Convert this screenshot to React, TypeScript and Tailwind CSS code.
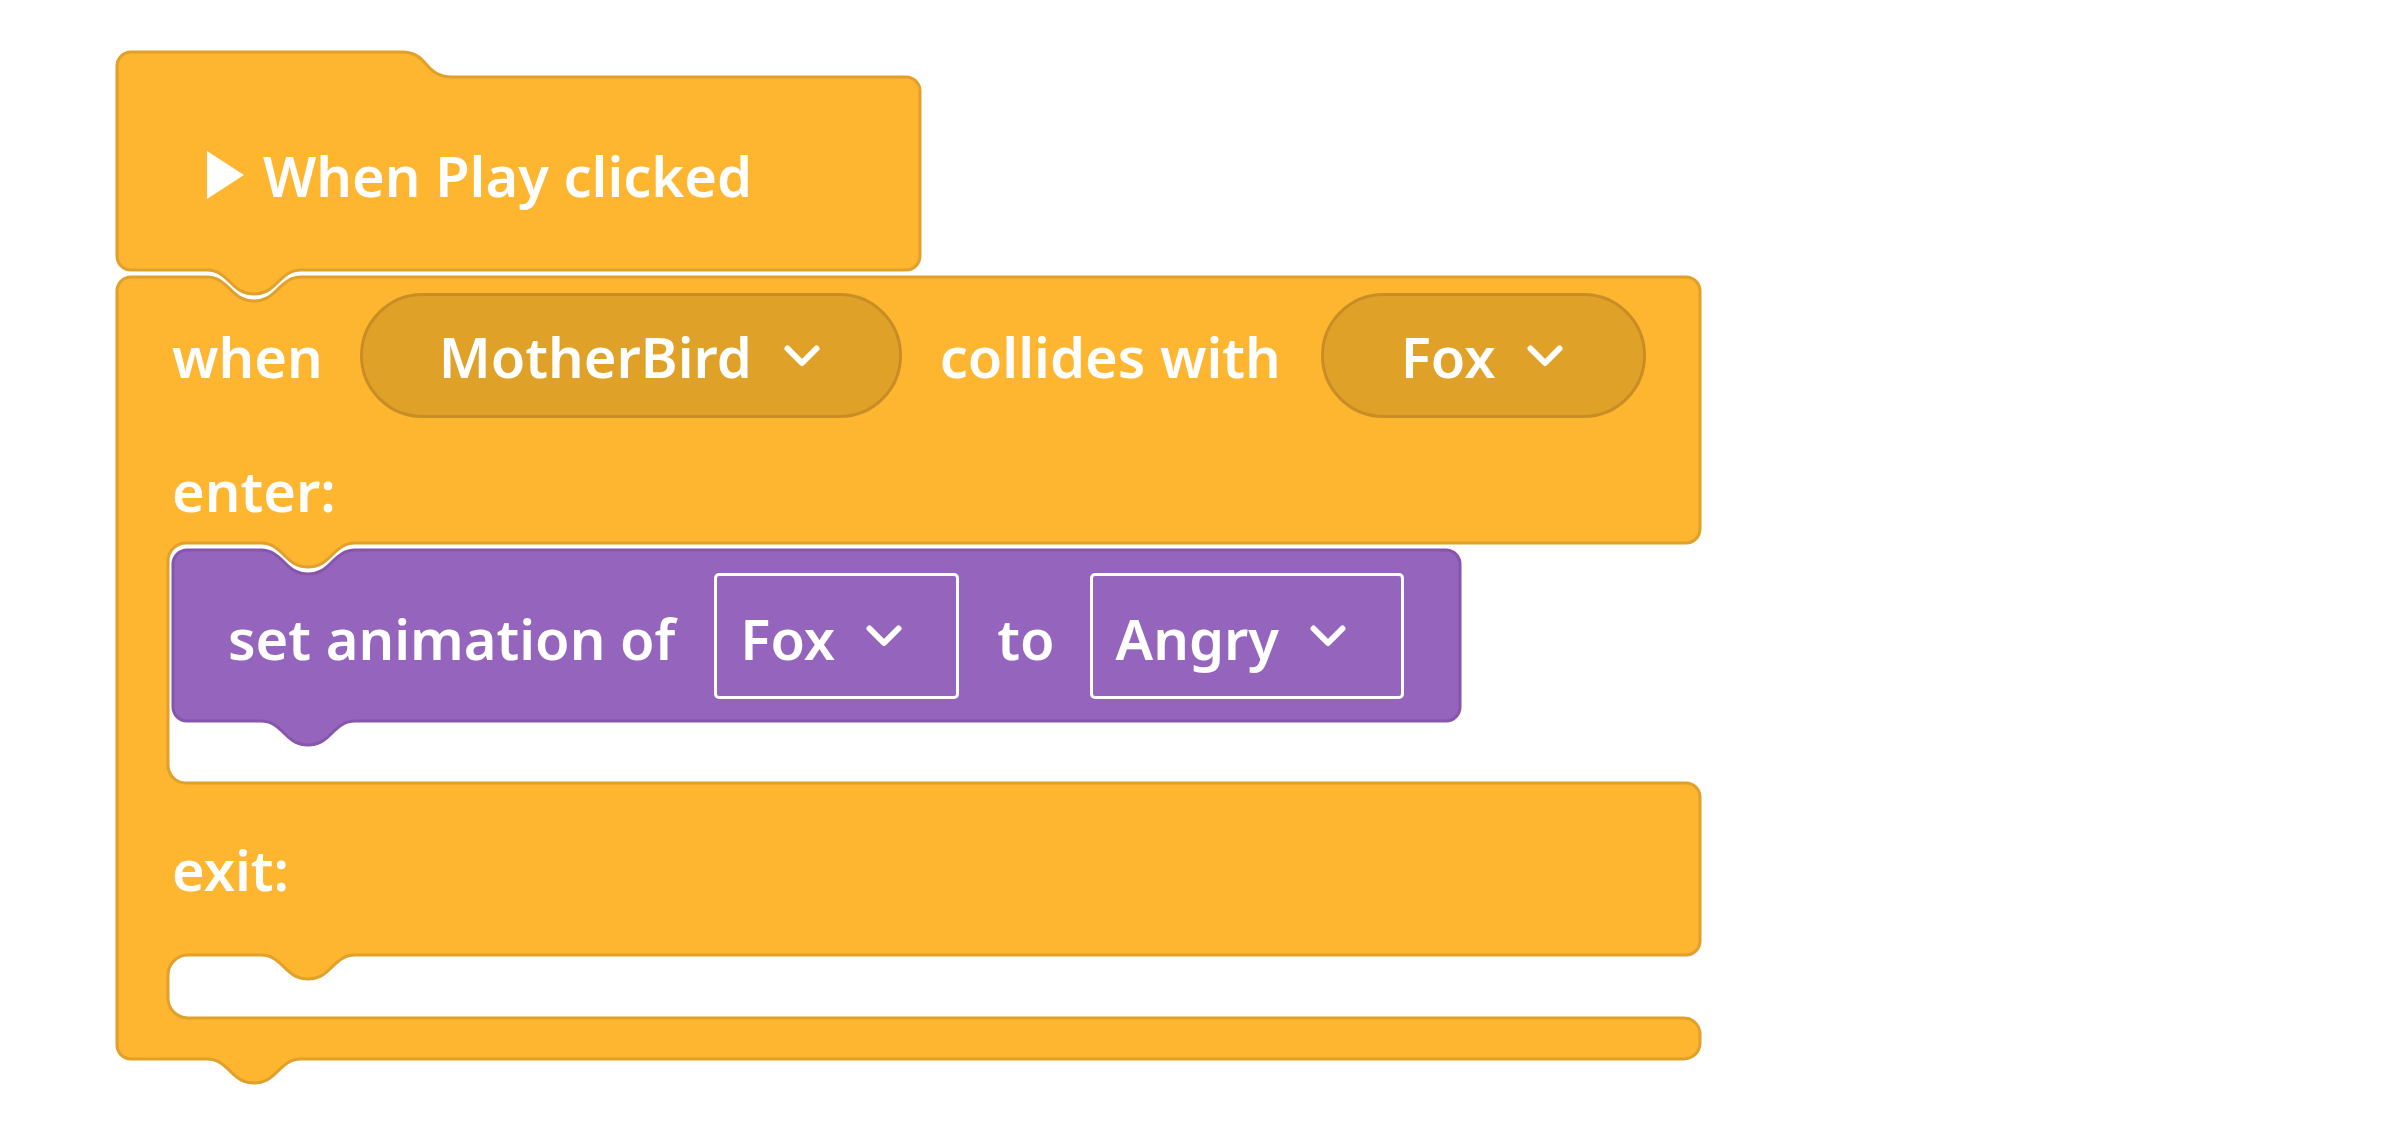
const ORANGE = '#FEB530'
const ORANGE_STROKE = '#E0A02A'
const PURPLE = '#9565BE'
const PURPLE_STROKE = '#8556AB'

// notch going right (dips into the block) and tab going left (sticks out below)
const NOTCH = 'c 10,0 16,5 24,13 c 7,7 13,11 23,11 c 10,0 16,-4 23,-11 c 8,-8 14,-13 24,-13'
const TAB = 'c -10,0 -16,5 -24,13 c -7,7 -13,11 -23,11 c -10,0 -16,-4 -23,-11 c -8,-8 -14,-13 -24,-13'

const HAT_PATH = `M 0,14 a 14,14 0 0 1 14,-14 H 285 c 12,0 18,5 24,12 c 6,7 12,13 26,13 H 789 a 14,14 0 0 1 14,14 V 204 a 14,14 0 0 1 -14,14 H 184 ${TAB} H 14 a 14,14 0 0 1 -14,-14 Z`

const C_PATH = `M 0,14 a 14,14 0 0 1 14,-14 H 90 ${NOTCH} H 1569 a 14,14 0 0 1 14,14 V 252 a 14,14 0 0 1 -14,14 H 238 ${TAB} H 69 a 18,18 0 0 0 -18,18 V 488 a 18,18 0 0 0 18,18 H 1569 a 14,14 0 0 1 14,14 V 664 a 14,14 0 0 1 -14,14 H 238 ${TAB} H 71 a 20,20 0 0 0 -20,20 V 721 a 20,20 0 0 0 20,20 H 1567 a 16,16 0 0 1 16,16 V 766 a 16,16 0 0 1 -16,16 H 184 ${TAB} H 14 a 14,14 0 0 1 -14,-14 Z`

const STMT_PATH = `M 0,14 a 14,14 0 0 1 14,-14 H 88 ${NOTCH} H 1273 a 14,14 0 0 1 14,14 V 157 a 14,14 0 0 1 -14,14 H 182 ${TAB} H 14 a 14,14 0 0 1 -14,-14 Z`

function Chevron() {
    return (
        <svg width="36" height="22" viewBox="0 0 36 22" className="shrink-0">
            <polyline points="3.5,3.5 18,18 32.5,3.5" fill="none" stroke="white" strokeWidth="6" strokeLinecap="round" strokeLinejoin="round" />
        </svg>
    )
}

function Shape({ d, w, h, fill, stroke }: { d: string; w: number; h: number; fill: string; stroke: string }) {
    return (
        <svg width={w} height={h} viewBox={`0 0 ${w} ${h}`} className="absolute left-0 top-0 overflow-visible">
            <path d={d} fill={fill} stroke={stroke} strokeWidth="3" strokeLinejoin="round" />
        </svg>
    )
}

export default function App() {
    return (
        <div
            className="min-h-screen bg-white pl-[117px] pt-[52px] flex flex-col text-white font-semibold text-[56px] leading-none"
            style={{ fontFamily: '"Noto Sans", "Open Sans", sans-serif' }}
        >
            {/* hat block */}
            <div className="relative w-[803px] h-[218px]">
                <Shape d={HAT_PATH} w={803} h={218} fill={ORANGE} stroke={ORANGE_STROKE} />
                <div className="relative flex items-center h-full pt-[28px] pl-[90px]">
                    <svg width="37" height="48" viewBox="0 0 37 48" className="shrink-0">
                        <polygon points="0,0 37,24 0,48" fill="white" />
                    </svg>
                    <span className="ml-[19px]">When Play clicked</span>
                </div>
            </div>

            {/* collision block */}
            <div className="relative mt-[7px] w-[1583px] h-[782px]">
                <Shape d={C_PATH} w={1583} h={782} fill={ORANGE} stroke={ORANGE_STROKE} />
                <div className="relative flex flex-col">
                    <div className="h-[266px] pl-[55px] pt-[16px] flex flex-col">
                        <div className="flex items-center h-[125px]">
                            <span>when</span>
                            <div className="ml-[37px] w-[542px] h-[125px] rounded-full border-[3px] border-[#C88E25] bg-[#E0A129] flex items-center pl-[76px] gap-[32px]">
                                <span>MotherBird</span>
                                <Chevron />
                            </div>
                            <span className="ml-[38px]">collides with</span>
                            <div className="ml-[40px] w-[325px] h-[125px] rounded-full border-[3px] border-[#C88E25] bg-[#E0A129] flex items-center pl-[77px] gap-[31px]">
                                <span>Fox</span>
                                <Chevron />
                            </div>
                        </div>
                        <span className="mt-[44px]">enter:</span>
                    </div>

                    <div className="h-[240px] pl-[56px] pt-[7px]">
                        <div className="relative w-[1287px] h-[171px]">
                            <Shape d={STMT_PATH} w={1287} h={171} fill={PURPLE} stroke={PURPLE_STROKE} />
                            <div className="relative flex items-center h-full pl-[55px]">
                                <span className="mt-[4px]">set animation of</span>
                                <div className="ml-[39px] w-[245px] h-[126px] rounded-[5px] border-[3px] border-white flex items-center pl-[23px] gap-[31px]">
                                    <span className="mt-[4px]">Fox</span>
                                    <Chevron />
                                </div>
                                <span className="ml-[38px] mt-[4px]">to</span>
                                <div className="ml-[35px] w-[314px] h-[126px] rounded-[5px] border-[3px] border-white flex items-center pl-[23px] gap-[31px]">
                                    <span className="mt-[4px]">Angry</span>
                                    <Chevron />
                                </div>
                            </div>
                        </div>
                    </div>

                    <div className="h-[172px] flex items-center pl-[55px]">
                        <span>exit:</span>
                    </div>
                    <div className="h-[63px]" />
                    <div className="h-[41px]" />
                </div>
            </div>
        </div>
    )
}
